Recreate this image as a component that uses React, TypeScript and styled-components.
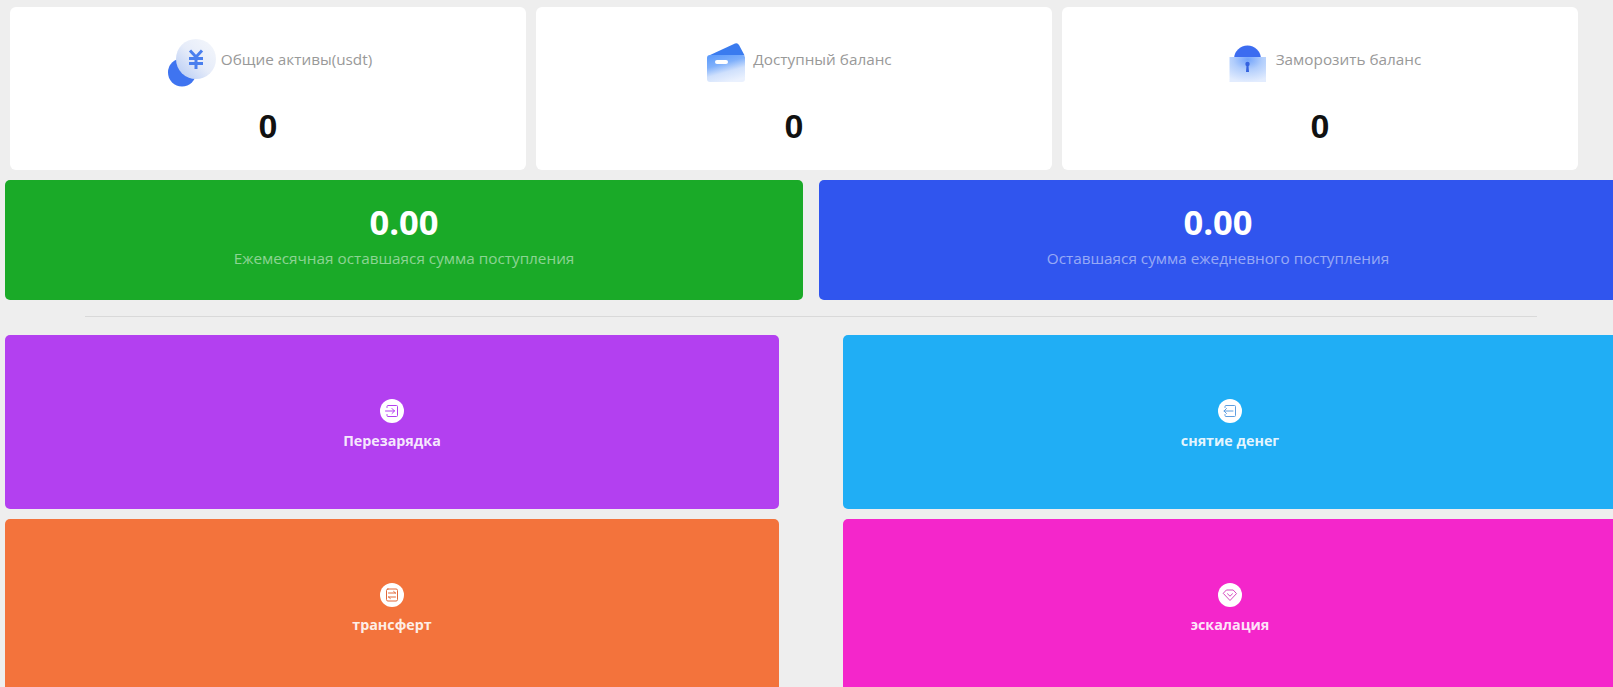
import React from "react";
import styled, { createGlobalStyle } from "styled-components";

const Global = createGlobalStyle`
  html, body { margin: 0; padding: 0; background: #eeeeee; overflow: hidden; }
  body { font-family: "Open Sans", "Noto Sans", "Liberation Sans", sans-serif; }
  * { box-sizing: border-box; }
`;

const Page = styled.div`
  width: 1613px;
  height: 687px;
  padding: 7px 0 0 5px;
  overflow: hidden;
  background: #eeeeee;
`;

const StatRow = styled.div`
  display: grid;
  grid-template-columns: repeat(3, 516px);
  gap: 10px;
  padding-left: 5px;
`;

const StatCard = styled.div`
  height: 163px;
  padding-top: 28px;
  background: #ffffff;
  border-radius: 6px;
  display: flex;
  flex-direction: column;
  align-items: center;
`;

const StatHead = styled.div`
  display: flex;
  align-items: center;
  gap: 5px;
  height: 50px;
  padding-left: 2px;

  svg {
    overflow: visible;
  }
`;

const StatLabel = styled.span`
  font-size: 15.3px;
  color: #999999;
  line-height: 20px;
  padding-bottom: 2px;
`;

const StatValue = styled.div`
  margin-top: 18px;
  font-family: "Liberation Sans", Arial, sans-serif;
  font-size: 34px;
  font-weight: 700;
  line-height: 46px;
  color: #111111;
`;

const MoneyRow = styled.div`
  display: grid;
  grid-template-columns: repeat(2, 798px);
  gap: 16px;
  margin-top: 10px;
`;

const MoneyCard = styled.div<{ $bg: string }>`
  height: 120px;
  padding-top: 19px;
  background: ${(p) => p.$bg};
  border-radius: 5px;
  text-align: center;
`;

const MoneyValue = styled.div`
  font-size: 34.5px;
  font-weight: 700;
  line-height: 46px;
  color: #ffffff;
`;

const MoneyLabel = styled.div`
  margin-top: 1px;
  font-size: 15.3px;
  line-height: 24px;
  color: rgba(255, 255, 255, 0.5);
`;

const Divider = styled.div`
  width: 1452px;
  height: 1px;
  margin: 16px 0 18px 80px;
  background: #d9d9d9;
`;

const ActionGrid = styled.div`
  display: grid;
  grid-template-columns: repeat(2, 774px);
  column-gap: 64px;
  row-gap: 10px;
`;

const ActionCard = styled.div<{ $bg: string }>`
  height: 174px;
  padding-top: 64px;
  background: ${(p) => p.$bg};
  border-radius: 5px;
  display: flex;
  flex-direction: column;
  align-items: center;
`;

const ActionIcon = styled.div`
  width: 24px;
  height: 24px;
  border-radius: 50%;
  background: #ffffff;
  display: flex;
  align-items: center;
  justify-content: center;
`;

const ActionLabel = styled.div`
  margin-top: 7px;
  font-size: 14.3px;
  font-weight: 700;
  line-height: 22px;
  color: rgba(255, 255, 255, 0.9);
`;

const CoinIcon = () => (
  <svg width="50" height="50" viewBox="0 0 50 50">
    <defs>
      <linearGradient id="coinFace" x1="0.9" y1="0.1" x2="0.1" y2="0.9">
        <stop offset="0" stopColor="#f2f5fb" />
        <stop offset="0.5" stopColor="#e6ecf9" />
        <stop offset="1" stopColor="#bccff5" />
      </linearGradient>
    </defs>
    <circle cx="16" cy="37.5" r="14" fill="#3f74f0" />
    <circle cx="30" cy="24" r="20" fill="url(#coinFace)" />
    <path
      d="M24 15.5 L30 22 L36 15.5 M23 23.5 H37 M23 28.5 H37 M30 22 V34"
      fill="none"
      stroke="#4a7fee"
      strokeWidth="3"
      strokeLinejoin="round"
    />
  </svg>
);

const WalletIcon = () => (
  <svg width="50" height="50" viewBox="0 0 50 50">
    <defs>
      <linearGradient id="walletBody" x1="0.2" y1="0" x2="0.6" y2="1">
        <stop offset="0" stopColor="#5e9cfb" />
        <stop offset="0.35" stopColor="#7fb0fb" />
        <stop offset="0.65" stopColor="#cfe0fc" />
        <stop offset="1" stopColor="#eaf1fe" />
      </linearGradient>
    </defs>
    <path d="M11 20.5 L37 8.6 Q39.6 7.6 41 10 L46.6 20.5 Z" fill="#3a7bef" />
    <path
      d="M12 20 H44 Q47 20 47 23 V44 Q47 47 44 47 H12 Q9 47 9 44 V23 Q9 20 12 20 Z"
      fill="url(#walletBody)"
    />
    <rect x="17" y="25" width="13" height="4" rx="2" fill="#ffffff" />
  </svg>
);

const LockIcon = () => (
  <svg width="50" height="50" viewBox="0 0 50 50">
    <defs>
      <radialGradient id="lockBody" cx="0.5" cy="0.1" r="0.9">
        <stop offset="0" stopColor="#73a4fb" />
        <stop offset="0.45" stopColor="#b2cefc" />
        <stop offset="1" stopColor="#e2ecfe" />
      </radialGradient>
    </defs>
    <path d="M13 24 A13.5 13.5 0 0 1 40 24 Z" fill="#3c6cf0" />
    <rect x="8.5" y="22" width="36.5" height="25" fill="url(#lockBody)" />
    <circle cx="26.5" cy="29" r="2.2" fill="#3563df" />
    <path d="M25.6 29 H27.4 L28 37 H25 Z" fill="#3563df" />
  </svg>
);

const RechargeGlyph = () => (
  <svg width="16" height="16" viewBox="0 0 16 16" fill="none" stroke="#b340f0" strokeWidth="1" strokeLinecap="round" strokeLinejoin="round">
    <path d="M3 4.5 V3.5 A1 1 0 0 1 4 2.5 H12.5 A1 1 0 0 1 13.5 3.5 V12.5 A1 1 0 0 1 12.5 13.5 H4 A1 1 0 0 1 3 12.5 V11.5" />
    <path d="M1.5 8 H10.5 M8 5.5 L10.5 8 L8 10.5" />
  </svg>
);

const WithdrawGlyph = () => (
  <svg width="16" height="16" viewBox="0 0 16 16" fill="none" stroke="#5f9fe0" strokeWidth="1" strokeLinecap="round" strokeLinejoin="round">
    <path d="M3 4.5 V3.5 A1 1 0 0 1 4 2.5 H12.5 A1 1 0 0 1 13.5 3.5 V12.5 A1 1 0 0 1 12.5 13.5 H4 A1 1 0 0 1 3 12.5 V11.5" />
    <path d="M11 8 H2 M4.5 5.5 L2 8 L4.5 10.5" />
  </svg>
);

const TransferGlyph = () => (
  <svg width="16" height="16" viewBox="0 0 16 16" fill="none" stroke="#e2683a" strokeWidth="1" strokeLinecap="round" strokeLinejoin="round">
    <rect x="2.5" y="2" width="11" height="12" rx="1.4" />
    <path d="M4.5 6 H11.5 M9.7 4.5 L11.5 6 M11.5 10 H4.5 M6.3 11.5 L4.5 10" />
  </svg>
);

const UpgradeGlyph = () => (
  <svg width="16" height="16" viewBox="0 0 16 16" fill="none" stroke="#d54abf" strokeWidth="1" strokeLinecap="round" strokeLinejoin="round">
    <path d="M4.8 3 H11.2 L14.5 6.6 L8 13.5 L1.5 6.6 Z" />
    <path d="M5.5 6.8 L8 9.2 L10.5 6.8" />
  </svg>
);

const stats = [
  { icon: <CoinIcon />, label: "Общие активы(usdt)", value: "0" },
  { icon: <WalletIcon />, label: "Доступный баланс", value: "0" },
  { icon: <LockIcon />, label: "Заморозить баланс", value: "0" },
];

const money = [
  { bg: "#1aaa28", value: "0.00", label: "Ежемесячная оставшаяся сумма поступления" },
  { bg: "#3055ee", value: "0.00", label: "Оставшаяся сумма ежедневного поступления" },
];

const actions = [
  { bg: "#b340f0", icon: <RechargeGlyph />, label: "Перезарядка" },
  { bg: "#20aef5", icon: <WithdrawGlyph />, label: "снятие денег" },
  { bg: "#f3733c", icon: <TransferGlyph />, label: "трансферт" },
  { bg: "#f426cb", icon: <UpgradeGlyph />, label: "эскалация" },
];

export default function App() {
  return (
    <>
      <Global />
      <Page>
        <StatRow>
          {stats.map((s) => (
            <StatCard key={s.label}>
              <StatHead>
                {s.icon}
                <StatLabel>{s.label}</StatLabel>
              </StatHead>
              <StatValue>{s.value}</StatValue>
            </StatCard>
          ))}
        </StatRow>
        <MoneyRow>
          {money.map((m) => (
            <MoneyCard key={m.label} $bg={m.bg}>
              <MoneyValue>{m.value}</MoneyValue>
              <MoneyLabel>{m.label}</MoneyLabel>
            </MoneyCard>
          ))}
        </MoneyRow>
        <Divider />
        <ActionGrid>
          {actions.map((a) => (
            <ActionCard key={a.label} $bg={a.bg}>
              <ActionIcon>{a.icon}</ActionIcon>
              <ActionLabel>{a.label}</ActionLabel>
            </ActionCard>
          ))}
        </ActionGrid>
      </Page>
    </>
  );
}
